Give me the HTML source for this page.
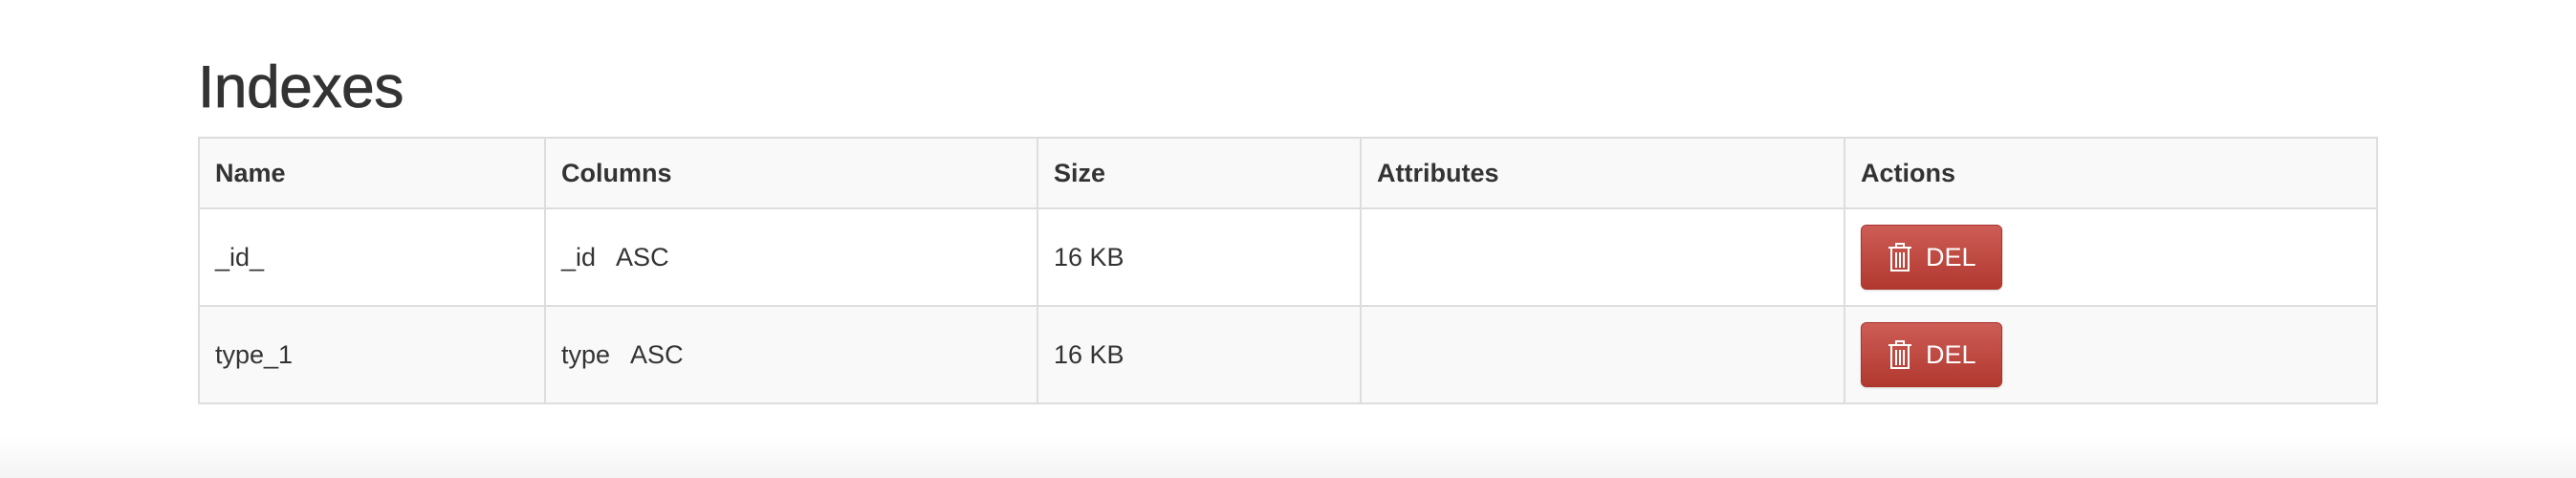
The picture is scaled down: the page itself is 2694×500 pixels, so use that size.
<!DOCTYPE html>
<html><head><style>
body{margin:0;width:2694px;height:500px;background:linear-gradient(#fff 0,#fff 455px,#f4f4f4 500px);font-family:"Liberation Sans",Arial,sans-serif;color:#333;position:relative;overflow:hidden}
h1{position:absolute;left:207px;top:52px;margin:0;font-size:62px;font-weight:normal;letter-spacing:-0.3px;line-height:80px;-webkit-text-stroke:0.8px #333}
table{position:absolute;left:207px;top:143px;border-collapse:collapse;table-layout:fixed;width:2278px}
td,th{border:2px solid #ddd;padding:0 0 0 16px;text-align:left;font-size:27px;vertical-align:middle}
th{height:72px;background:#f9f9f9;font-weight:bold}
td{height:100px}
tr.odd td{background:#f9f9f9}
.btn{display:inline-flex;align-items:center;width:148px;height:68px;box-sizing:border-box;border:1px solid #a8342d;border-radius:6px;background:linear-gradient(#cd5d56,#b1382f);color:#fff;font-size:27px;padding-left:27px;margin-left:0;box-shadow:0 1px 2px rgba(0,0,0,.15)}
.btn svg{margin-right:14px}
</style></head><body>
<h1>Indexes</h1>
<table>
<colgroup><col style="width:362px"><col style="width:515px"><col style="width:338px"><col style="width:506px"><col style="width:557px"></colgroup>
<tr><th>Name</th><th>Columns</th><th>Size</th><th>Attributes</th><th>Actions</th></tr>
<tr><td>_id_</td><td>_id&nbsp;&nbsp; ASC</td><td>16 KB</td><td></td><td><span class="btn"><svg width="26" height="32" viewBox="0 0 26 32" fill="none" stroke="#fff" stroke-width="2"><path d="M1 6H25M9 6V2H17V6M4 7V30H22V7M9 11V27M13 11V27M17 11V27"/></svg>DEL</span></td></tr>
<tr class="odd"><td>type_1</td><td>type&nbsp;&nbsp; ASC</td><td>16 KB</td><td></td><td><span class="btn"><svg width="26" height="32" viewBox="0 0 26 32" fill="none" stroke="#fff" stroke-width="2"><path d="M1 6H25M9 6V2H17V6M4 7V30H22V7M9 11V27M13 11V27M17 11V27"/></svg>DEL</span></td></tr>
</table>
</body></html>
